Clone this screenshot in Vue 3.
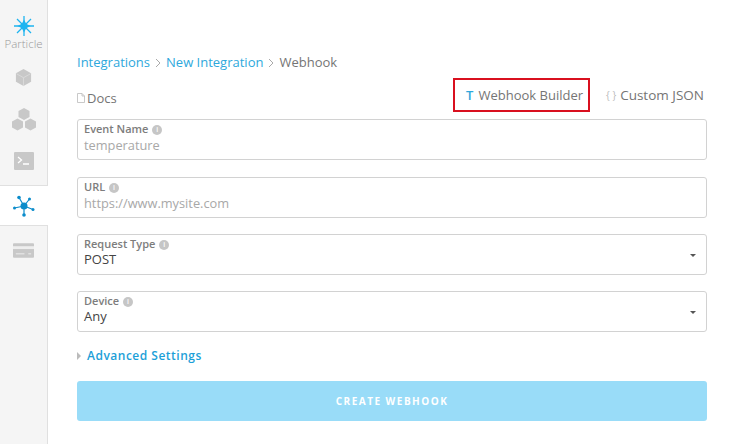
<script setup>
const fields = [
  { label: 'Event Name', placeholder: 'temperature' },
  { label: 'URL', placeholder: 'https://www.mysite.com' },
  { label: 'Request Type', value: 'POST', select: true },
  { label: 'Device', value: 'Any', select: true }
]
</script>

<template>
  <div class="page">
    <aside class="sidebar">
      <div class="logo">
        <svg viewBox="0 0 20 20" width="20" height="20" fill="#1eb4f0" stroke="#1eb4f0" aria-hidden="true">
          <path stroke-width="1.300" d="M10 0v20M0 10h20M3 3l14 14M17 3L3 17" />
          <path stroke="none" d="M10 3.500l2.200 4.300 4.300 2.200-4.300 2.200-2.200 4.300-2.200-4.300L3.500 10l4.300-2.200z" />
        </svg>
        <span>Particle</span>
      </div>
      <div class="nav-item">
        <svg viewBox="0 0 20 20" width="19" height="19" fill="#c8c8c8" aria-hidden="true">
          <path d="M10 1l8 4.500v9L10 19l-8-4.500v-9z" />
          <path d="M2.500 6L10 10.200 17.500 6M10 10.200V19" fill="none" stroke="#dedede" stroke-width=".8" />
        </svg>
      </div>
      <div class="nav-item">
        <svg viewBox="0 0 26 24" width="26" height="24" fill="#c8c8c8" aria-hidden="true">
          <path d="M13 1l5.500 3v6L13 13l-5.500-3V4zM6.500 11.500l5.500 3v6l-5.500 3-5.500-3v-6zM19.500 11.500l5.500 3v6l-5.500 3-5.500-3v-6z" />
        </svg>
      </div>
      <div class="nav-item terminal">
        <svg viewBox="0 0 20 18" width="20" height="18" aria-hidden="true">
          <rect width="20" height="18" rx="1" fill="#c8c8c8" />
          <path d="M4 5l3.500 3L4 11M9 12h6" fill="none" stroke="#fff" stroke-width="1.300" />
        </svg>
      </div>
      <div class="nav-item active">
        <svg viewBox="0 0 24 24" width="24" height="24" fill="#0b8ccb" stroke="#0b8ccb" aria-hidden="true">
          <path stroke-width="1.200" d="M12 12L7 3.500M12 12l5.500-7M12 12L2.500 14M12 12l9 3.500M12 12v9" />
          <circle cx="12" cy="12" r="3.500" stroke="none" />
          <circle cx="7" cy="3.500" r="1.800" stroke="none" />
          <circle cx="17.500" cy="5" r="1.500" stroke="none" />
          <circle cx="2.500" cy="14" r="1.500" stroke="none" />
          <circle cx="21" cy="15.500" r="1.500" stroke="none" />
          <circle cx="12" cy="21" r="1.800" stroke="none" />
        </svg>
      </div>
      <div class="nav-item card">
        <svg viewBox="0 0 22 15" width="21" height="15" aria-hidden="true">
          <rect width="22" height="15" rx="1" fill="#c8c8c8" />
          <rect y="3" width="22" height="3" fill="#eee" />
          <path d="M3 11h9M16 11h3" stroke="#eee" stroke-width="1" />
        </svg>
      </div>
    </aside>

    <main class="content">
      <nav class="crumbs">
        <a>Integrations</a>
        <svg class="sep" viewBox="0 0 6 10" width="6" height="10" aria-hidden="true"><path d="M1 1l4 4-4 4" fill="none" stroke="#aaa" /></svg>
        <a>New Integration</a>
        <svg class="sep" viewBox="0 0 6 10" width="6" height="10" aria-hidden="true"><path d="M1 1l4 4-4 4" fill="none" stroke="#aaa" /></svg>
        <span>Webhook</span>
      </nav>

      <div class="toolbar">
        <div class="docs">
          <svg viewBox="0 0 8 10" width="8" height="10" aria-hidden="true"><path d="M.5.500h4.500l2.500 2.500v6.500h-7zM5 .5V3h2.500" fill="none" stroke="#bbb" stroke-width=".8" /></svg>
          <span>Docs</span>
        </div>
        <div class="modes">
          <button class="mode selected" type="button"><span class="mode-icon t">T</span>Webhook Builder</button>
          <button class="mode json" type="button"><span class="mode-icon">{ }</span>Custom JSON</button>
        </div>
      </div>

      <form class="form" @submit.prevent>
        <div v-for="field in fields" :key="field.label" class="field">
          <label>{{ field.label }} <i class="info">i</i></label>
          <div class="value" :class="{ placeholder: !field.select }">{{ field.value || field.placeholder }}</div>
          <span v-if="field.select" class="caret"></span>
        </div>

        <div class="advanced">
          <span class="arrow"></span>
          <a>Advanced Settings</a>
        </div>

        <button class="create" type="submit">CREATE WEBHOOK</button>
      </form>
    </main>
  </div>
</template>

<style scoped>
.page {
  display: flex;
  width: 740px;
  height: 444px;
  overflow: hidden;
  background: #fff;
  font-family: "Open Sans", "Liberation Sans", sans-serif;
  color: #757575;
}

.sidebar {
  width: 48px;
  flex: none;
  display: flex;
  flex-direction: column;
  background: #f5f5f5;
  border-right: 1px solid #e0e0e0;
  box-sizing: border-box;
}

.logo {
  height: 56px;
  padding-top: 16px;
  box-sizing: border-box;
  display: flex;
  flex-direction: column;
  align-items: center;
  gap: 2px;
  color: #999;
  font-size: 11.500px;
  font-weight: 300;
  line-height: 12px;
}

.nav-item {
  height: 42px;
  display: flex;
  align-items: center;
  justify-content: center;
  box-sizing: border-box;
}

.nav-item.terminal {
  margin-bottom: 3px;
}

.nav-item.active {
  width: 48px;
  height: 41px;
  background: #fff;
  border-top: 1px solid #e0e0e0;
  border-bottom: 1px solid #e0e0e0;
  margin-right: -1px;
  position: relative;
}

.nav-item.card {
  height: 48px;
}

.content {
  flex: 1;
  padding: 54px 33px 0 29px;
  min-width: 0;
}

.crumbs {
  display: flex;
  align-items: center;
  gap: 5px;
  font-size: 13px;
  line-height: 17px;
}

.crumbs a {
  color: #2ea8dc;
}

.toolbar {
  display: flex;
  justify-content: space-between;
  align-items: flex-start;
  margin-top: 7px;
  height: 41px;
}

.docs {
  display: flex;
  align-items: center;
  gap: 2px;
  font-size: 13px;
  margin-top: 11px;
}

.modes {
  display: flex;
  align-items: center;
  gap: 8px;
}

.mode {
  display: flex;
  align-items: center;
  height: 34px;
  padding: 0 5px 0 11px;
  background: none;
  border: 2px solid transparent;
  font: inherit;
  font-size: 13px;
  color: #757575;
}

.mode.selected {
  border-color: #d9101f;
}

.mode.json {
  padding: 0 1px 0 6px;
  font-size: 13.500px;
}

.mode-icon {
  margin-right: 4px;
  color: #bbb;
  font-size: 10px;
}

.mode-icon.t {
  margin-right: 5px;
  color: #2ea8dc;
  font-size: 13px;
  font-weight: 600;
}

.form {
  display: flex;
  flex-direction: column;
}

.field {
  position: relative;
  height: 41px;
  margin-bottom: 16px;
  padding: 2px 6px;
  box-sizing: border-box;
  border: 1px solid #d2d2d2;
  border-radius: 3px;
}

.field:first-child {
  margin-bottom: 17px;
}

.field label {
  display: block;
  font-size: 11px;
  line-height: 14px;
  font-weight: 600;
  color: #7d7d7d;
}

.info {
  display: inline-block;
  width: 10px;
  height: 10px;
  margin-left: 1px;
  border-radius: 50%;
  background: #c6c6c6;
  color: #fff;
  font-size: 7px;
  font-style: normal;
  line-height: 10px;
  text-align: center;
  vertical-align: 1px;
}

.value {
  font-size: 13px;
  line-height: 16px;
  color: #444;
}

.value.placeholder {
  margin-top: 1px;
  font-size: 12.800px;
  color: #a8a8a8;
}

.caret {
  position: absolute;
  right: 10px;
  top: 19px;
  border-left: 3px solid transparent;
  border-right: 3px solid transparent;
  border-top: 3px solid #555;
}

.advanced {
  display: flex;
  align-items: center;
  gap: 6px;
  font-size: 12px;
  font-weight: 600;
  line-height: 16px;
  letter-spacing: 0.5px;
}

.advanced a {
  color: #1c9fd8;
}

.arrow {
  border-top: 4px solid transparent;
  border-bottom: 4px solid transparent;
  border-left: 4px solid #bbb;
}

.create {
  height: 40px;
  margin-top: 17px;
  border: 0;
  border-radius: 3px;
  background: #99dcf8;
  color: #fff;
  font: inherit;
  font-size: 10px;
  font-weight: 700;
  letter-spacing: 1.500px;
}
</style>

<style>
html,
body {
  margin: 0;
}
</style>
